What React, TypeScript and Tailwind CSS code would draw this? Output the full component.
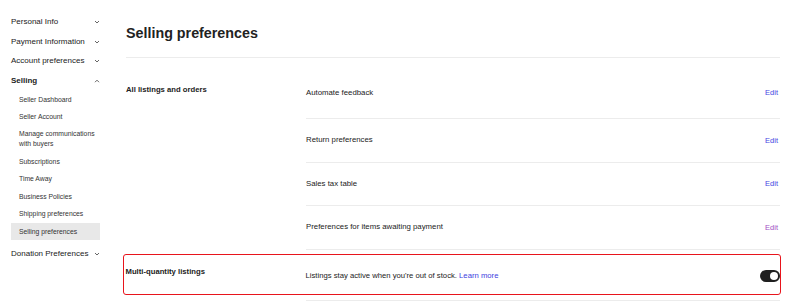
import { Fragment } from "react";

interface NavItem {
	label: string;
	open?: boolean;
	children?: string[];
}

const nav: NavItem[] = [
	{ label: "Personal Info" },
	{ label: "Payment Information" },
	{ label: "Account preferences" },
	{
		label: "Selling",
		open: true,
		children: [
			"Seller Dashboard",
			"Seller Account",
			"Manage communications with buyers",
			"Subscriptions",
			"Time Away",
			"Business Policies",
			"Shipping preferences",
			"Selling preferences",
		],
	},
	{ label: "Donation Preferences" },
];

const rows = [
	{ label: "Automate feedback", visited: false },
	{ label: "Return preferences", visited: false },
	{ label: "Sales tax table", visited: false },
	{ label: "Preferences for items awaiting payment", visited: true },
];

const Chevron = ({ up }: { up?: boolean }) => (
	<svg width="6" height="4" viewBox="0 0 6 4">
		<path
			d={up ? "M1 3.2 3 1.2 5 3.2" : "M1 1 3 3 5 1"}
			fill="none"
			stroke="#555"
			strokeWidth="0.9"
		/>
	</svg>
);

const App = () => {
	return (
		<div className="flex h-[304px] w-[800px] overflow-hidden bg-white font-['Liberation_Sans',Arial,sans-serif] text-[#222]">
			<aside className="w-[126px] shrink-0 pl-[11px] pt-[12px]">
				{nav.map((item) => (
					<Fragment key={item.label}>
						<div
							className={`flex h-[19.7px] w-[89px] items-center justify-between text-[8px] ${
								item.label === "Donation Preferences" ? "mt-[4px]" : ""
							} ${item.open ? "font-bold" : ""}`}
						>
							<span>{item.label}</span>
							<Chevron up={item.open} />
						</div>
						{item.children?.map((child) => (
							<div
								key={child}
								className={`flex w-[89px] items-center pl-[8px] pr-[4px] text-[6.8px] leading-[10px] text-[#333] ${
									child.length > 25 ? "h-[27px]" : "h-[17.5px]"
								} ${child === "Selling preferences" ? "bg-[#e8e8e8]" : ""}`}
							>
								{child}
							</div>
						))}
					</Fragment>
				))}
			</aside>

			<main className="flex-1 pr-[20px]">
				<div className="h-[58px] border-b border-[#ececec] pt-[25px]">
					<h1 className="text-[14.3px] font-bold leading-[17px]">
						Selling preferences
					</h1>
				</div>

				<div className="grid grid-cols-[180px_1fr]">
					<h2 className="pt-[27px] text-[7.7px] font-bold leading-[10px]">
						All listings and orders
					</h2>
					<div>
						{rows.map((row, i) => (
							<div
								key={row.label}
								className={`flex items-center justify-between border-b border-[#ececec] text-[7.8px] ${
									i === 0 ? "h-[61px] pt-[10px]" : "h-[43.5px]"
								}`}
							>
								<span>{row.label}</span>
								<a
									className={`pr-[2px] text-[7.5px] ${
										row.visited ? "text-[#a24fc4]" : "text-[#4646e2]"
									}`}
								>
									Edit
								</a>
							</div>
						))}
					</div>
				</div>

				<div className="-ml-[3px] -mr-[1px] mt-[4px] grid h-[41px] grid-cols-[180px_1fr] rounded-[3px] border-[1.5px] border-[#e8141c] pl-[1.5px] pr-[0.5px]">
					<h2 className="pt-[12px] text-[7.7px] font-bold leading-[10px]">
						Multi-quantity listings
					</h2>
					<div className="flex items-center justify-between pt-[3px] text-[7.7px]">
						<p>
							Listings stay active when you're out of stock.{" "}
							<a className="text-[#3d3de0]">Learn more</a>
						</p>
						<span className="flex h-[12px] w-[20px] items-center justify-end rounded-full bg-[#1f1f1f] pr-[2px]">
							<span className="h-[8px] w-[8px] rounded-full bg-white" />
						</span>
					</div>
				</div>
				<div className="ml-[180px] mt-[5px] border-t border-[#ececec]" />
			</main>
		</div>
	);
};

export default App;
